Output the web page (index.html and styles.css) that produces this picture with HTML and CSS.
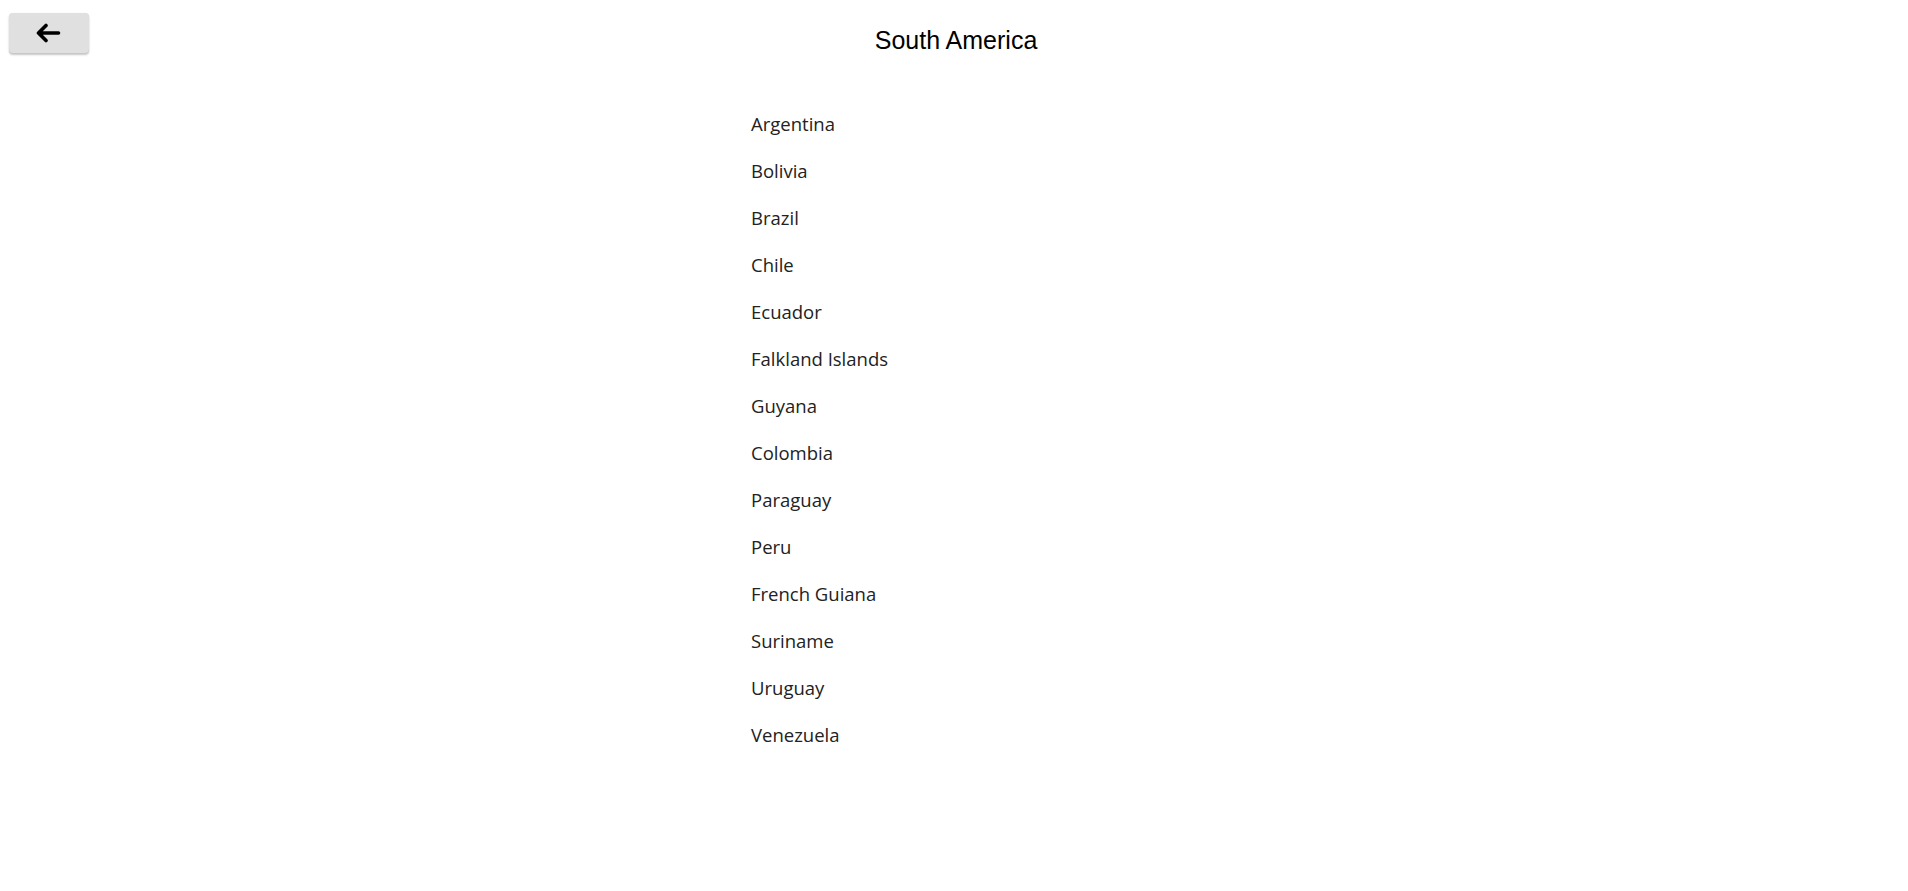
FILE: index.html
```html
<!DOCTYPE html>
<html lang="en">
<head>
<meta charset="utf-8">
<title>South America</title>
<link rel="stylesheet" href="styles.css">
</head>
<body>
<header class="topbar">
  <div class="topbar-left">
    <button class="back-btn" type="button" aria-label="Back">
      <svg class="back-icon" width="26" height="20" viewBox="0 0 26 20" aria-hidden="true">
        <path d="M23.5 10H3.5M11 2.5L3.5 10L11 17.5" fill="none" stroke="#000" stroke-width="3.6" stroke-linecap="round" stroke-linejoin="round"/>
      </svg>
    </button>
  </div>
  <h1 class="title">South America</h1>
  <div class="topbar-right"></div>
</header>
<main class="content">
  <ul class="country-list">
    <li class="country">Argentina</li>
    <li class="country">Bolivia</li>
    <li class="country">Brazil</li>
    <li class="country">Chile</li>
    <li class="country">Ecuador</li>
    <li class="country">Falkland Islands</li>
    <li class="country">Guyana</li>
    <li class="country">Colombia</li>
    <li class="country">Paraguay</li>
    <li class="country">Peru</li>
    <li class="country">French Guiana</li>
    <li class="country">Suriname</li>
    <li class="country">Uruguay</li>
    <li class="country">Venezuela</li>
  </ul>
</main>
</body>
</html>
```

FILE: styles.css
```css
html, body {
  margin: 0;
  padding: 0;
  background: #ffffff;
}

body {
  font-family: "Open Sans", "Noto Sans", sans-serif;
  color: #212121;
}

.topbar {
  display: grid;
  grid-template-columns: 1fr auto 1fr;
  align-items: start;
}

.topbar-left {
  display: flex;
  padding: 13px 0 0 9px;
}

.back-btn {
  width: 80px;
  height: 40px;
  border: none;
  border-radius: 4px;
  background: #e0e0e0;
  box-shadow: 0 2px 2px rgba(0, 0, 0, 0.22), 0 0 1px rgba(0, 0, 0, 0.14);
  display: flex;
  align-items: center;
  justify-content: center;
  padding: 0;
  margin: 0;
  cursor: pointer;
}

.back-icon {
  display: block;
  margin-left: -2px;
}

.title {
  margin: 26px 0 0 0;
  font-family: "Liberation Sans", Arial, sans-serif;
  font-weight: 400;
  font-size: 25px;
  line-height: 28px;
  color: #000000;
  padding-left: 4px;
}

.content {
  display: flex;
  justify-content: center;
  margin-top: 46px;
}

.country-list {
  list-style: none;
  margin: 0;
  padding: 0;
  width: 406px;
}

.country {
  font-size: 18.5px;
  line-height: 47px;
  height: 47px;
  color: #222222;
}
```
